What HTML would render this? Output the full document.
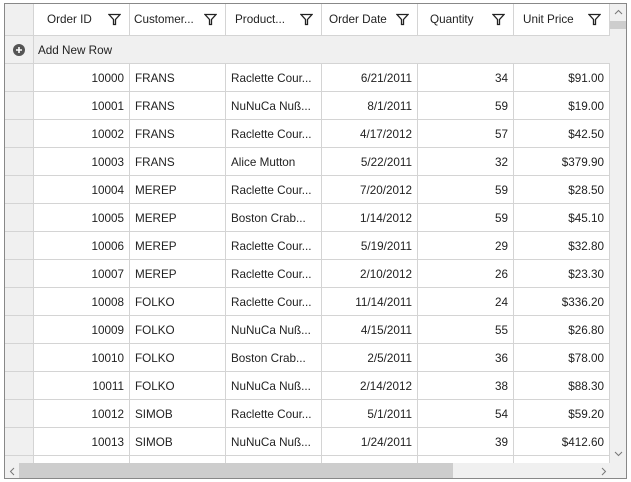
<!DOCTYPE html>
<html><head><meta charset="utf-8"><style>
*{margin:0;padding:0;box-sizing:border-box}
body{width:631px;height:482px;background:#fff;font-family:"Segoe UI","Liberation Sans",sans-serif;font-size:11.7px;color:#222;overflow:hidden;position:relative}
#g{position:absolute;left:4px;top:3px;width:623px;height:476px;border:1px solid #888;overflow:hidden;background:#fff}
.r{position:absolute;left:0;height:28px;width:605px;border-bottom:1px solid #d4d4d4}
.c{position:absolute;top:0;height:100%;border-right:1px solid #d4d4d4;line-height:29px;padding:0 5px;white-space:nowrap;overflow:hidden}
.rh{left:0;width:29px;background:#f0f0f0}
.n{text-align:right}
.h .c{line-height:31px}
.f{position:absolute;right:8px;top:9px}
</style></head><body>
<div id="g">
<div class="r h" style="top:0;height:32px">
<div class="c rh"></div>
<div class="c" style="left:29px;width:96px;padding-left:13px">Order ID<svg class="f" width="13" height="13" viewBox="0 0 13 13"><path d="M1 1.5H12L7.5 6.5V11.5H5.5V6.5Z" fill="none" stroke="#222" stroke-width="1.3"/></svg></div>
<div class="c" style="left:125px;width:96px;padding-left:4px">Customer...<svg class="f" width="13" height="13" viewBox="0 0 13 13"><path d="M1 1.5H12L7.5 6.5V11.5H5.5V6.5Z" fill="none" stroke="#222" stroke-width="1.3"/></svg></div>
<div class="c" style="left:221px;width:96px;padding-left:9px">Product...<svg class="f" width="13" height="13" viewBox="0 0 13 13"><path d="M1 1.5H12L7.5 6.5V11.5H5.5V6.5Z" fill="none" stroke="#222" stroke-width="1.3"/></svg></div>
<div class="c" style="left:317px;width:96px;padding-left:7px">Order Date<svg class="f" width="13" height="13" viewBox="0 0 13 13"><path d="M1 1.5H12L7.5 6.5V11.5H5.5V6.5Z" fill="none" stroke="#222" stroke-width="1.3"/></svg></div>
<div class="c" style="left:413px;width:96px;padding-left:12px">Quantity<svg class="f" width="13" height="13" viewBox="0 0 13 13"><path d="M1 1.5H12L7.5 6.5V11.5H5.5V6.5Z" fill="none" stroke="#222" stroke-width="1.3"/></svg></div>
<div class="c" style="left:509px;width:96px;padding-left:9px">Unit Price<svg class="f" width="13" height="13" viewBox="0 0 13 13"><path d="M1 1.5H12L7.5 6.5V11.5H5.5V6.5Z" fill="none" stroke="#222" stroke-width="1.3"/></svg></div>
</div>
<div class="r" style="top:32px;background:#f0f0f0">
<div class="c rh"><svg style="position:absolute;left:8px;top:8px" width="12" height="12" viewBox="0 0 12 12"><circle cx="6" cy="6" r="6" fill="#555"/><path d="M6 3V9M3 6H9" stroke="#fff" stroke-width="1.6"/></svg></div>
<div class="c" style="left:29px;width:300px;border:none;padding-left:4px">Add New Row</div>
</div>
<div class="r" style="top:60px"><div class="c rh"></div><div class="c n" style="left:29px;width:96px">10000</div><div class="c" style="left:125px;width:96px">FRANS</div><div class="c" style="left:221px;width:96px">Raclette Cour...</div><div class="c n" style="left:317px;width:96px">6/21/2011</div><div class="c n" style="left:413px;width:96px">34</div><div class="c n" style="left:509px;width:96px">$91.00</div></div>
<div class="r" style="top:88px"><div class="c rh"></div><div class="c n" style="left:29px;width:96px">10001</div><div class="c" style="left:125px;width:96px">FRANS</div><div class="c" style="left:221px;width:96px">NuNuCa Nuß...</div><div class="c n" style="left:317px;width:96px">8/1/2011</div><div class="c n" style="left:413px;width:96px">59</div><div class="c n" style="left:509px;width:96px">$19.00</div></div>
<div class="r" style="top:116px"><div class="c rh"></div><div class="c n" style="left:29px;width:96px">10002</div><div class="c" style="left:125px;width:96px">FRANS</div><div class="c" style="left:221px;width:96px">Raclette Cour...</div><div class="c n" style="left:317px;width:96px">4/17/2012</div><div class="c n" style="left:413px;width:96px">57</div><div class="c n" style="left:509px;width:96px">$42.50</div></div>
<div class="r" style="top:144px"><div class="c rh"></div><div class="c n" style="left:29px;width:96px">10003</div><div class="c" style="left:125px;width:96px">FRANS</div><div class="c" style="left:221px;width:96px">Alice Mutton</div><div class="c n" style="left:317px;width:96px">5/22/2011</div><div class="c n" style="left:413px;width:96px">32</div><div class="c n" style="left:509px;width:96px">$379.90</div></div>
<div class="r" style="top:172px"><div class="c rh"></div><div class="c n" style="left:29px;width:96px">10004</div><div class="c" style="left:125px;width:96px">MEREP</div><div class="c" style="left:221px;width:96px">Raclette Cour...</div><div class="c n" style="left:317px;width:96px">7/20/2012</div><div class="c n" style="left:413px;width:96px">59</div><div class="c n" style="left:509px;width:96px">$28.50</div></div>
<div class="r" style="top:200px"><div class="c rh"></div><div class="c n" style="left:29px;width:96px">10005</div><div class="c" style="left:125px;width:96px">MEREP</div><div class="c" style="left:221px;width:96px">Boston Crab...</div><div class="c n" style="left:317px;width:96px">1/14/2012</div><div class="c n" style="left:413px;width:96px">59</div><div class="c n" style="left:509px;width:96px">$45.10</div></div>
<div class="r" style="top:228px"><div class="c rh"></div><div class="c n" style="left:29px;width:96px">10006</div><div class="c" style="left:125px;width:96px">MEREP</div><div class="c" style="left:221px;width:96px">Raclette Cour...</div><div class="c n" style="left:317px;width:96px">5/19/2011</div><div class="c n" style="left:413px;width:96px">29</div><div class="c n" style="left:509px;width:96px">$32.80</div></div>
<div class="r" style="top:256px"><div class="c rh"></div><div class="c n" style="left:29px;width:96px">10007</div><div class="c" style="left:125px;width:96px">MEREP</div><div class="c" style="left:221px;width:96px">Raclette Cour...</div><div class="c n" style="left:317px;width:96px">2/10/2012</div><div class="c n" style="left:413px;width:96px">26</div><div class="c n" style="left:509px;width:96px">$23.30</div></div>
<div class="r" style="top:284px"><div class="c rh"></div><div class="c n" style="left:29px;width:96px">10008</div><div class="c" style="left:125px;width:96px">FOLKO</div><div class="c" style="left:221px;width:96px">Raclette Cour...</div><div class="c n" style="left:317px;width:96px">11/14/2011</div><div class="c n" style="left:413px;width:96px">24</div><div class="c n" style="left:509px;width:96px">$336.20</div></div>
<div class="r" style="top:312px"><div class="c rh"></div><div class="c n" style="left:29px;width:96px">10009</div><div class="c" style="left:125px;width:96px">FOLKO</div><div class="c" style="left:221px;width:96px">NuNuCa Nuß...</div><div class="c n" style="left:317px;width:96px">4/15/2011</div><div class="c n" style="left:413px;width:96px">55</div><div class="c n" style="left:509px;width:96px">$26.80</div></div>
<div class="r" style="top:340px"><div class="c rh"></div><div class="c n" style="left:29px;width:96px">10010</div><div class="c" style="left:125px;width:96px">FOLKO</div><div class="c" style="left:221px;width:96px">Boston Crab...</div><div class="c n" style="left:317px;width:96px">2/5/2011</div><div class="c n" style="left:413px;width:96px">36</div><div class="c n" style="left:509px;width:96px">$78.00</div></div>
<div class="r" style="top:368px"><div class="c rh"></div><div class="c n" style="left:29px;width:96px">10011</div><div class="c" style="left:125px;width:96px">FOLKO</div><div class="c" style="left:221px;width:96px">NuNuCa Nuß...</div><div class="c n" style="left:317px;width:96px">2/14/2012</div><div class="c n" style="left:413px;width:96px">38</div><div class="c n" style="left:509px;width:96px">$88.30</div></div>
<div class="r" style="top:396px"><div class="c rh"></div><div class="c n" style="left:29px;width:96px">10012</div><div class="c" style="left:125px;width:96px">SIMOB</div><div class="c" style="left:221px;width:96px">Raclette Cour...</div><div class="c n" style="left:317px;width:96px">5/1/2011</div><div class="c n" style="left:413px;width:96px">54</div><div class="c n" style="left:509px;width:96px">$59.20</div></div>
<div class="r" style="top:424px"><div class="c rh"></div><div class="c n" style="left:29px;width:96px">10013</div><div class="c" style="left:125px;width:96px">SIMOB</div><div class="c" style="left:221px;width:96px">NuNuCa Nuß...</div><div class="c n" style="left:317px;width:96px">1/24/2011</div><div class="c n" style="left:413px;width:96px">39</div><div class="c n" style="left:509px;width:96px">$412.60</div></div>
<div class="r" style="top:452px"><div class="c rh"></div><div class="c" style="left:29px;width:96px"></div><div class="c" style="left:125px;width:96px"></div><div class="c" style="left:221px;width:96px"></div><div class="c" style="left:317px;width:96px"></div><div class="c" style="left:413px;width:96px"></div><div class="c" style="left:509px;width:96px"></div></div>
<div style="position:absolute;left:605px;top:0;width:17px;height:459px;background:#f0f0f0">
<div style="position:absolute;left:0;top:17px;width:17px;height:8px;background:#cdcdcd"></div>
<svg style="position:absolute;left:4px;top:5px" width="9" height="6"><path d="M1 5L4.5 1.5L8 5" fill="none" stroke="#777"/></svg>
<svg style="position:absolute;left:4px;top:447px" width="9" height="6"><path d="M1 1L4.5 4.5L8 1" fill="none" stroke="#777"/></svg>
</div>
<div style="position:absolute;left:0;top:459px;width:622px;height:16px;background:#f0f0f0">
<div style="position:absolute;left:14px;top:0;width:434px;height:16px;background:#cdcdcd"></div>
<svg style="position:absolute;left:4px;top:4px" width="6" height="9"><path d="M5 1L1.5 4.5L5 8" fill="none" stroke="#777"/></svg>
<svg style="position:absolute;left:596px;top:4px" width="6" height="9"><path d="M1 1L4.5 4.5L1 8" fill="none" stroke="#777"/></svg>
</div>
</div>
</body></html>
